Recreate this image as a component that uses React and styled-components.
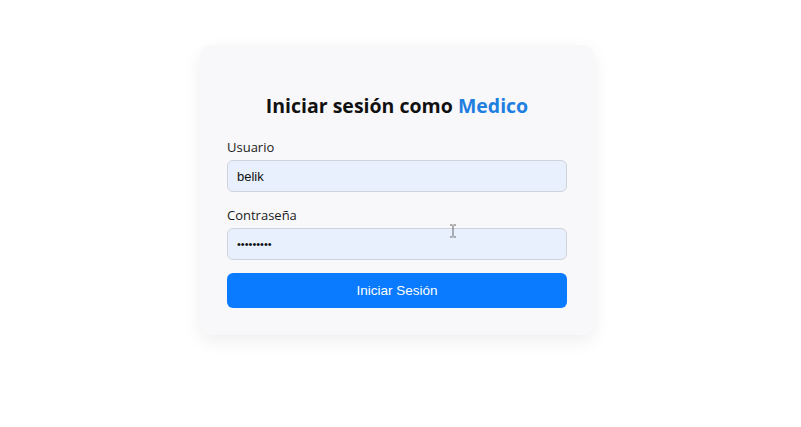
import React from "react";
import styled, { createGlobalStyle } from "styled-components";

const GlobalStyle = createGlobalStyle`
  html, body {
    margin: 0;
    padding: 0;
    background: #ffffff;
  }
  * {
    box-sizing: border-box;
  }
`;

const Page = styled.div`
  display: flex;
  justify-content: center;
  padding: 45px 7px 0 0;
  min-height: 427px;
  background: #ffffff;
`;

const Card = styled.form`
  width: 394px;
  padding: 47px 27px 27px;
  background: #f8f8fa;
  border-radius: 12px;
  box-shadow: 0 6px 18px rgba(0, 0, 0, 0.07);
  align-self: flex-start;
`;

const Title = styled.h2`
  margin: 0 0 17px;
  font-family: "Open Sans", "Noto Sans", sans-serif;
  font-size: 19.5px;
  line-height: 28px;
  font-weight: 700;
  color: #111111;
  text-align: center;
`;

const Role = styled.span`
  color: #1f7fe0;
`;

const Field = styled.div`
  position: relative;
  margin-bottom: 13px;
`;

const Label = styled.label`
  display: block;
  margin-bottom: 3px;
  font-family: "Open Sans", "Noto Sans", sans-serif;
  font-size: 13px;
  line-height: 20px;
  color: #1b1b1b;
`;

const Input = styled.input`
  display: block;
  width: 100%;
  height: 32px;
  padding: 0 9px;
  border: 1px solid #cfd3da;
  border-radius: 6px;
  background: #e8f0fe;
  font-family: "Liberation Sans", Arial, sans-serif;
  font-size: ${(p) => (p.type === "password" ? "11px" : "13px")};
  color: #111111;
  outline: none;
`;

const Button = styled.button`
  display: block;
  width: 100%;
  height: 35px;
  border: none;
  border-radius: 6px;
  background: #0a7bff;
  color: #ffffff;
  font-family: "Liberation Sans", Arial, sans-serif;
  font-size: 13.5px;
  cursor: pointer;
`;

const Caret = styled.svg`
  position: absolute;
  left: 222px;
  top: 19px;
  pointer-events: none;
`;

export default function App() {
  return (
    <>
      <GlobalStyle />
      <Page>
        <Card onSubmit={(e) => e.preventDefault()}>
          <Title>
            Iniciar sesión como <Role>Medico</Role>
          </Title>
          <Field>
            <Label htmlFor="usuario">Usuario</Label>
            <Input id="usuario" type="text" defaultValue="belik" />
          </Field>
          <Field>
            <Label htmlFor="pass">Contraseña</Label>
            <Input id="pass" type="password" defaultValue="123456789" />
            <Caret width="8" height="14" viewBox="0 0 8 14">
              <path d="M1 1h2.5M4.5 1H7M4 1.5v11M1 13h2.5M4.5 13H7" stroke="#666" strokeWidth="1" fill="none" />
            </Caret>
          </Field>
          <Button type="submit">Iniciar Sesión</Button>
        </Card>
      </Page>
    </>
  );
}
